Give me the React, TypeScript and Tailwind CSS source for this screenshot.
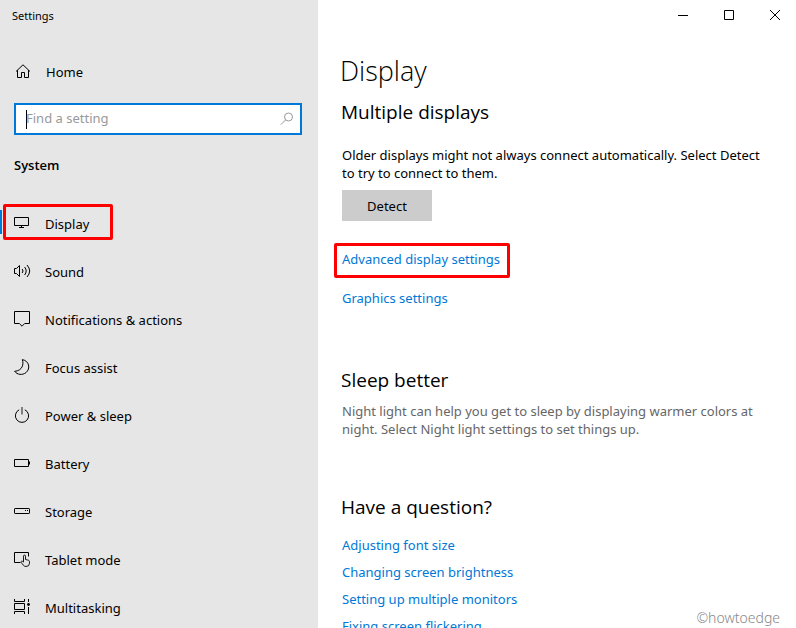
import type { ReactNode } from "react";

function Icon({ children, className = "" }: { children: ReactNode; className?: string }) {
  return (
    <svg
      viewBox="0 0 18 18"
      width="18"
      height="18"
      fill="none"
      stroke="currentColor"
      strokeWidth="1"
      aria-hidden="true"
      className={"shrink-0 " + className}
    >
      {children}
    </svg>
  );
}

const navItems: { label: string; active?: boolean; icon: ReactNode }[] = [
  {
    label: "Display",
    active: true,
    icon: <path d="M.5 2.500h14v8H.5zM7.500 11v1.500M5 12.500h5" />,
  },
  {
    label: "Sound",
    icon: (
      <>
        <path d="M.5 5.500h2L5.500 2.500v11l-3-3h-2z" />
        <path d="M8.200 6q1.600 2 0 4M10.600 4q3.200 4 0 8M13 2q5.400 6 0 12" />
      </>
    ),
  },
  {
    label: "Notifications & actions",
    icon: <path d="M.5.5h15v12h-4.800L8 15.200 5.300 12.500H.5z" />,
  },
  {
    label: "Focus assist",
    icon: <path d="M8.300.6C10 5 8.500 11.800.6 12.300c2.700 3.600 7.900 4.100 11.400 1.300C16.800 9.500 15.200 1.800 8.300.6z" />,
  },
  {
    label: "Power & sleep",
    icon: (
      <>
        <path d="M5.200 2.800a6.600 6.600 0 1 0 5.600 0" />
        <path d="M8 0v7.500" strokeWidth="1.600" stroke="#666" />
      </>
    ),
  },
  {
    label: "Battery",
    icon: <path d="M.5 4.500h14v7H.5zM15.500 6.500v3" />,
  },
  {
    label: "Storage",
    icon: (
      <>
        <rect x=".5" y="5.500" width="15" height="5" rx=".6" />
        <path d="M11 7.500h1M13 7.500h1" />
      </>
    ),
  },
  {
    label: "Tablet mode",
    icon: (
      <>
        <path d="M6.500 11.500h-6v-10h14v4" />
        <path
          d="M9.500 11V5.200q0-1.100 1-1.100t1 1.100V8.500l2.900.7q1.100.4 1.100 1.600v1.400q0 3.300-3.500 3.300-1.600 0-2.700-1.300L7.200 11.400q-.4-.9.400-1.200.7-.2 1.200.400z"
          strokeWidth=".9"
        />
      </>
    ),
  },
  {
    label: "Multitasking",
    icon: (
      <>
        <path d="M.5 0v2.500h10V0M.5 4.500h10v6H.5zM.5 15v-2.500h10V15M14.500 0v3M14.500 8v7" />
        <circle cx="14.500" cy="5.500" r="1.400" fill="currentColor" stroke="none" />
      </>
    ),
  },
];

const questions = [
  "Adjusting font size",
  "Changing screen brightness",
  "Setting up multiple monitors",
  "Fixing screen flickering",
];

function Highlight({ className }: { className: string }) {
  return <span aria-hidden="true" className={"pointer-events-none absolute rounded-xs border-3 border-[#ff0000] " + className} />;
}

function Sidebar() {
  return (
    <aside className="w-[318px] shrink-0 bg-[#e6e6e6]">
      <div className="flex h-8 items-center px-3 text-[11px]">Settings</div>
      <a href="#home" className="mt-4 flex h-12 items-center gap-3.5 px-3.5">
        <Icon>
          <path d="M2 8.500 9 1.800l7 6.700M3.500 7.200v7.300h4v-5h3v5h4V7.200" />
        </Icon>
        Home
      </a>
      <label className="mt-[7px] mr-4 ml-3.5 flex h-8 items-center border-2 border-[#0078d7] bg-white px-2.5">
        <span aria-hidden="true" className="-mr-px h-[19px] w-px bg-black" />
        <input
          type="text"
          aria-label="Find a setting"
          placeholder="Find a setting"
          className="h-5 min-w-0 flex-1 bg-transparent pb-0.5 outline-none placeholder:text-[#999]"
        />
        <svg viewBox="0 0 14 14" width="14" height="14" fill="none" stroke="#999" aria-hidden="true" className="-mr-1 shrink-0">
          <circle cx="8.500" cy="5" r="4" />
          <path d="M5.600 7.900.8 12.700" />
        </svg>
      </label>
      <h2 className="mt-5 px-3.5 font-['Open_Sans',sans-serif] leading-5 font-semibold">System</h2>
      <nav aria-label="System" className="mt-[25px]">
        {navItems.map((item) => (
          <a
            key={item.label}
            href="#section"
            aria-current={item.active ? "page" : undefined}
            className="relative flex h-12 items-center gap-[13px] px-3.5"
          >
            {item.active && (
              <>
                <span className="absolute top-2.5 left-0 h-6 w-0.5 bg-[#0078d7]" />
                <Highlight className="top-1 left-[3px] h-9 w-[110px]" />
              </>
            )}
            <Icon>{item.icon}</Icon>
            {item.label}
          </a>
        ))}
      </nav>
    </aside>
  );
}

const sectionHeading = "-ml-px font-['Open_Sans',sans-serif] text-[19px] leading-6";

export default function App() {
  return (
    <div className="flex h-screen overflow-hidden bg-white font-['Noto_Sans','Open_Sans',sans-serif] text-[13px] leading-[18px] text-black">
      <Sidebar />
      <div className="min-w-0 flex-1">
        <header className="flex h-[30px] items-center justify-end gap-9 pr-4">
          <button type="button" aria-label="Minimize">
            <svg width="10" height="10" stroke="#000" className="block"><path d="M0 5.500h10" /></svg>
          </button>
          <button type="button" aria-label="Maximize">
            <svg width="10" height="10" fill="none" stroke="#000" className="block"><path d="M.5.5h9v9h-9z" /></svg>
          </button>
          <button type="button" aria-label="Close">
            <svg width="10" height="10" stroke="#000" className="block"><path d="m0 0 10 10M10 0 0 10" /></svg>
          </button>
        </header>
        <main className="pt-[23px] pr-7 pl-6">
          <h1 className="-ml-0.5 font-['Open_Sans',sans-serif] text-[27px] leading-9 font-light">Display</h1>
          <section>
            <h2 className={sectionHeading + " mt-[11px]"}>Multiple displays</h2>
            <p className="mt-[22px]">
              Older displays might not always connect automatically. Select Detect to try to connect to them.
            </p>
            <button type="button" className="mt-2 flex h-[31px] w-[90px] items-center justify-center bg-[#ccc]">
              Detect
            </button>
            <div className="mt-[29px] flex flex-col items-start gap-[21px] text-[#0078d7]">
              <a href="#advanced" className="relative">
                Advanced display settings
                <Highlight className="-top-[7px] -left-2 h-[35px] w-44" />
              </a>
              <a href="#graphics">Graphics settings</a>
            </div>
          </section>
          <section className="mt-[61px]">
            <h2 className={sectionHeading}>Sleep better</h2>
            <p className="mt-2.5 text-[#666]">
              Night light can help you get to sleep by displaying warmer colors at night. Select Night light settings to set things up.
            </p>
          </section>
          <section className="mt-[57px]">
            <h2 className={sectionHeading}>Have a question?</h2>
            <ul className="mt-[17px] flex flex-col gap-[9px] text-[#0078d7]">
              {questions.map((question) => (
                <li key={question}>
                  <a href="#help">{question}</a>
                </li>
              ))}
            </ul>
          </section>
        </main>
      </div>
      <div className="pointer-events-none absolute right-4 bottom-0 text-[14px] leading-5 font-light text-[#888]">
        ©howtoedge
      </div>
    </div>
  );
}
